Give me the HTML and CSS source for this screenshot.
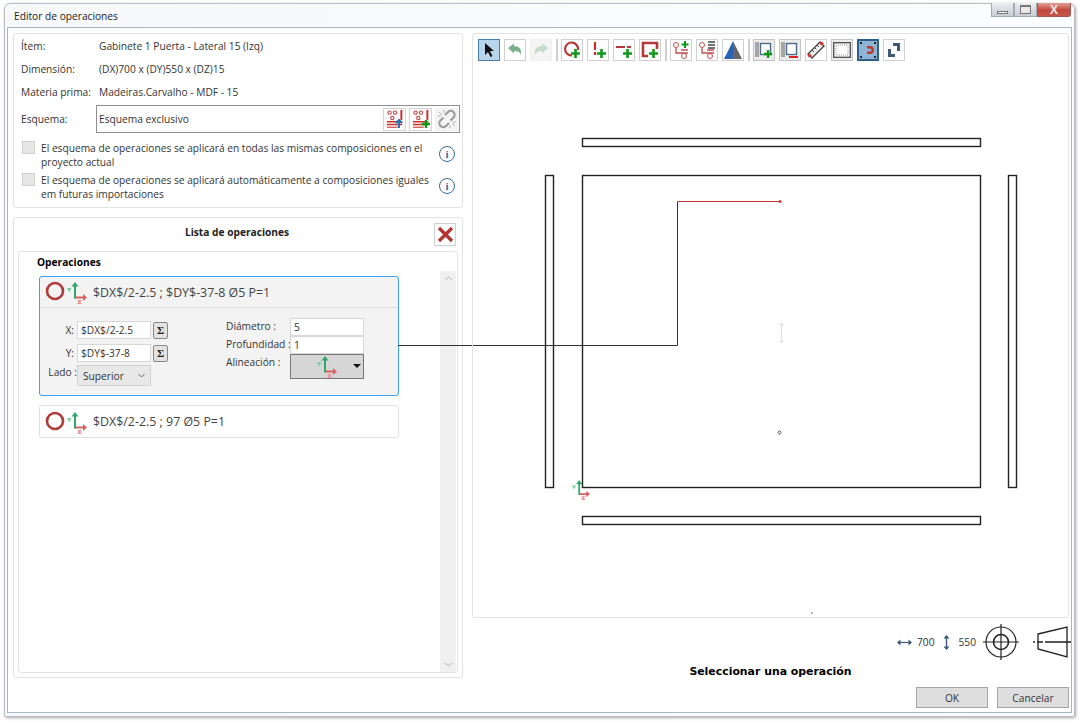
FILE: index.html
```html
<!DOCTYPE html>
<html lang="es">
<head>
  <meta charset="UTF-8" />
  <meta name="viewport" content="width=device-width, initial-scale=1.0"/>
  <title>Editor de operaciones</title>
  <link rel="stylesheet" href="styles.css">
</head>
<body>

<svg class="defs" width="0" height="0">
  <symbol id="axes" viewBox="0 0 20 22">
    <path d="M8 15.500h9" fill="none" stroke="#d9625f" stroke-width="2"/>
    <path d="M8 16.500V3" fill="none" stroke="#2fa86b" stroke-width="2"/>
    <path d="M8 0l3.500 4.500h-7z" fill="#2fa86b"/>
    <path d="M20 15.500l-4-3.500v7z" fill="#d9625f"/>
    <path d="M0 6h4.500l-2.200 4.500z" fill="#7fd0a3"/>
    <path d="M10 18h5l-1.700 2 1.700 2h-5l1.700-2z" fill="#e59a98"/>
  </symbol>
  <symbol id="plus" viewBox="0 0 11 11">
    <path d="M5.500 1v9M1 5.500h9" stroke="#0d9a18" stroke-width="2.600"/>
  </symbol>
  <symbol id="scheme" viewBox="0 0 22 22">
    <circle cx="5" cy="4" r="1.800" fill="none" stroke="#c0504d" stroke-width="1.300"/>
    <circle cx="11" cy="4" r="1.800" fill="none" stroke="#c0504d" stroke-width="1.300"/>
    <circle cx="8" cy="10" r="1.800" fill="none" stroke="#c0504d" stroke-width="1.300"/>
    <path d="M18 1v11" stroke="#c8302c" stroke-width="2.200"/>
    <path d="M2 14h17M2 17h17" stroke="#c8302c" stroke-width="1.600"/>
    <path d="M2 20h12" stroke="#c8302c" stroke-width="1.200"/>
  </symbol>
  <symbol id="op-hole" viewBox="0 0 42 26">
    <circle cx="10" cy="12" r="8" fill="none" stroke="#b23a38" stroke-width="2.600"/>
    <use href="#axes" x="22" y="3" width="20" height="22"/>
  </symbol>
</svg>

<div class="window">
  <div class="titlebar">
    <span class="title-text">Editor de operaciones</span>
    <div class="win-btns">
      <div class="win-btn"><span class="glyph-min"></span></div>
      <div class="win-btn"><span class="glyph-max"></span></div>
      <div class="win-btn win-close">X</div>
    </div>
  </div>

  <div class="content">
    <div class="left-col">

      <div class="card info-card">
        <div class="info-row"><span>Ítem:</span><span>Gabinete 1 Puerta - Lateral 15 (Izq)</span></div>
        <div class="info-row"><span>Dimensión:</span><span>(DX)700 x (DY)550 x (DZ)15</span></div>
        <div class="info-row"><span>Materia prima:</span><span>Madeiras.Carvalho - MDF - 15</span></div>
        <div class="info-row scheme-row">
          <span>Esquema:</span>
          <div class="scheme-box">
            <span class="scheme-name">Esquema exclusivo</span>
            <button class="mini-btn">
              <svg width="20" height="20"><use href="#scheme" width="20" height="20"/><path d="M14 19v-6M11 14l3-3 3 3" fill="none" stroke="#2672b8" stroke-width="2"/></svg>
            </button>
            <button class="mini-btn">
              <svg width="20" height="20"><use href="#scheme" width="20" height="20"/><use href="#plus" x="10" y="10" width="10" height="10"/></svg>
            </button>
            <button class="mini-btn flat">
              <svg width="20" height="20" viewBox="0 0 20 20"><path d="M8 6l3-3a3 3 0 0 1 5.500 5.500l-3 3M12 14l-3 3a3 3 0 0 1-5.500-5.500l3-3" fill="none" stroke="#9a9a9a" stroke-width="2"/><path d="M2 3l3 3M1 7h3M7 1v3M18 17l-3-3M19 13h-3M13 19v-3" stroke="#b5b5b5"/></svg>
            </button>
          </div>
        </div>
        <div class="check-row">
          <span class="check"></span>
          <span class="check-text">El esquema de operaciones se aplicará en todas las mismas composiciones en el proyecto actual</span>
          <span class="info-icon">i</span>
        </div>
        <div class="check-row">
          <span class="check"></span>
          <span class="check-text">El esquema de operaciones se aplicará automáticamente a composiciones iguales em futuras importaciones</span>
          <span class="info-icon">i</span>
        </div>
      </div>

      <div class="card list-card">
        <div class="list-head">
          <span class="list-title">Lista de operaciones</span>
          <button class="close-list">
            <svg width="17" height="17" viewBox="0 0 17 17"><path d="M2 2l13 13M15 2L2 15" stroke="#b5322f" stroke-width="3.200"/></svg>
          </button>
        </div>
        <div class="list-box">
          <div class="list-main">
            <div class="list-label">Operaciones</div>

            <div class="op selected">
              <div class="op-head">
                <svg class="op-icon" width="42" height="26"><use href="#op-hole"/></svg>
                <span>$DX$/2-2.5 ; $DY$-37-8 Ø5 P=1</span>
              </div>
              <div class="op-body">
                <div class="op-pos">
                  <div class="field"><label>X:</label><input class="inp" value="$DX$/2-2.5" /><button class="sigma">Σ</button></div>
                  <div class="field"><label>Y:</label><input class="inp" value="$DY$-37-8" /><button class="sigma">Σ</button></div>
                  <div class="field lado"><label>Lado :</label>
                    <div class="select">Superior
                      <svg width="7" height="5" viewBox="0 0 7 5"><path d="M.5 1l3 3 3-3" fill="none" stroke="#666"/></svg>
                    </div>
                  </div>
                </div>
                <div class="op-size">
                  <label>Diámetro :</label><input class="inp" value="5" />
                  <label>Profundidad :</label><input class="inp" value="1" />
                  <label>Alineación :</label>
                  <div class="align-drop">
                    <svg width="20" height="22"><use href="#axes" width="20" height="22"/></svg>
                    <span class="drop-arrow"></span>
                  </div>
                </div>
              </div>
              <div class="op-link"></div>
            </div>

            <div class="op">
              <div class="op-head">
                <svg class="op-icon" width="42" height="26"><use href="#op-hole"/></svg>
                <span>$DX$/2-2.5 ; 97 Ø5 P=1</span>
              </div>
            </div>
          </div>
          <div class="scroll">
            <svg width="9" height="5" viewBox="0 0 9 5"><path d="M1 4l3.500-3L8 4" fill="none" stroke="#c8c8c8" stroke-width="1.200"/></svg>
            <svg width="9" height="5" viewBox="0 0 9 5"><path d="M1 1l3.500 3L8 1" fill="none" stroke="#c8c8c8" stroke-width="1.200"/></svg>
          </div>
        </div>
      </div>
    </div>

    <div class="right-col">
      <div class="card canvas-card">
        <div class="toolbar">
          <button class="tool active"><svg width="14" height="16" viewBox="0 0 14 16"><path d="M3 1v12l3-3 2.500 5 2-1-2.500-5H12z" fill="#111"/></svg></button>
          <button class="tool"><svg width="16" height="14" viewBox="0 0 16 14"><path d="M1 5l6-4.500V3c5 0 8 3 7 9-1-3-3-4-7-4v2.500z" fill="#7bb08a"/></svg></button>
          <button class="tool off"><svg width="16" height="14" viewBox="0 0 16 14"><path d="M15 5L9 .5V3C4 3 1 6 2 12c1-3 3-4 7-4v2.500z" fill="#c4dcc9"/></svg></button>
          <span class="tool-sep"></span>
          <button class="tool"><svg width="18" height="18" viewBox="0 0 18 18"><path d="M9 14.500A6.500 6.500 0 1 1 15 9" fill="none" stroke="#b23a38" stroke-width="2.200"/><use href="#plus" x="7" y="7" width="11" height="11"/></svg></button>
          <button class="tool"><svg width="18" height="18" viewBox="0 0 18 18"><path d="M6 1v8M6 11v3" stroke="#c8302c" stroke-width="2.200"/><use href="#plus" x="7" y="7" width="11" height="11"/></svg></button>
          <button class="tool"><svg width="18" height="18" viewBox="0 0 18 18"><path d="M1 6h9M12 6h4" stroke="#b23a38" stroke-width="2.200"/><use href="#plus" x="7" y="7" width="11" height="11"/></svg></button>
          <button class="tool"><svg width="18" height="18" viewBox="0 0 18 18"><path d="M7 15H2V2h14v6" fill="none" stroke="#b23a38" stroke-width="2.600"/><use href="#plus" x="7" y="7" width="11" height="11"/></svg></button>
          <span class="tool-sep"></span>
          <button class="tool"><svg width="18" height="18" viewBox="0 0 18 18"><circle cx="4" cy="4" r="2.500" fill="none" stroke="#c0504d"/><circle cx="12" cy="15" r="2.500" fill="none" stroke="#c0504d"/><path d="M4 7v5h6M9 9h7M9 12h7" fill="none" stroke="#c0504d" stroke-width="1.300"/><path d="M13 0v7M9.500 3.500h7" stroke="#0d9a18" stroke-width="2"/></svg></button>
          <button class="tool"><svg width="18" height="18" viewBox="0 0 18 18"><circle cx="4" cy="4" r="2.500" fill="none" stroke="#c0504d"/><circle cx="12" cy="15" r="2.500" fill="none" stroke="#c0504d"/><path d="M4 7v5h6M9 9h7M9 12h7" fill="none" stroke="#c0504d" stroke-width="1.300"/><path d="M10 1h7M10 4h7M10 7h7" stroke="#444" stroke-width="1.600"/></svg></button>
          <button class="tool"><svg width="20" height="20" viewBox="0 0 20 20"><path d="M10 1v18H1z" fill="#2a62b5"/><path d="M10 1v18h9z" fill="#666"/></svg></button>
          <span class="tool-sep"></span>
          <button class="tool gray"><svg width="18" height="18" viewBox="0 0 18 18"><path d="M1 1v15M3 1v15" stroke="#777" stroke-width="1.200"/><rect x="5.500" y="2.500" width="10" height="11" fill="#fff" stroke="#4d6c8c" stroke-width="1.400"/><use href="#plus" x="8" y="8" width="10" height="10"/></svg></button>
          <button class="tool gray"><svg width="18" height="18" viewBox="0 0 18 18"><path d="M1 1v15M3 1v15" stroke="#777" stroke-width="1.200"/><rect x="5.500" y="2.500" width="10" height="11" fill="#fff" stroke="#4d6c8c" stroke-width="1.400"/><path d="M8 16h9" stroke="#d22" stroke-width="2"/></svg></button>
          <button class="tool"><svg width="20" height="20" viewBox="0 0 20 20"><path d="M2 14L14 2l4 4L6 18z" fill="#f4f4f4" stroke="#444" stroke-width="1.400"/><path d="M6 10l2 2M8.500 7.500l2 2M11 5l2 2" stroke="#444"/><circle cx="3.500" cy="15.500" r="1.800" fill="#d33"/><circle cx="15.500" cy="3.500" r="1.800" fill="#d33"/></svg></button>
          <button class="tool gray"><svg width="18" height="16" viewBox="0 0 18 16"><rect x=".7" y=".7" width="16.600" height="14.600" fill="#fff" stroke="#555" stroke-width="1.400"/><rect x="3" y="3" width="12" height="10" fill="none" stroke="#999" stroke-dasharray="1 1"/></svg></button>
          <button class="tool active dark"><svg width="18" height="18" viewBox="0 0 18 18"><path d="M8 5h3a4 4 0 0 1 0 8H8v-2.500h3a1.500 1.500 0 0 0 0-3H8z" fill="#c0392b"/><path d="M1 1h2v2H1zM15 1h2v2h-2zM1 15h2v2H1zM15 15h2v2h-2z" fill="#223"/></svg></button>
          <button class="tool"><svg width="16" height="16" viewBox="0 0 16 16"><path d="M2 15V7h3v5h4v3zM14 1v8h-3V4H7V1z" fill="#3c5a78"/></svg></button>
        </div>

        <svg class="drawing" width="595" height="583" viewBox="473 34 595 583">
          <g fill="none" stroke="#222" stroke-width="1.400">
            <rect x="582.500" y="138.500" width="398" height="8"/>
            <rect x="582.500" y="175.500" width="398" height="312"/>
            <rect x="545.500" y="175.500" width="8" height="312"/>
            <rect x="1008.500" y="175.500" width="8" height="312"/>
            <rect x="582.500" y="516.500" width="398" height="8"/>
          </g>
          <path d="M472 345.500h205.500V201.500" fill="none" stroke="#333"/>
          <path d="M677.500 201.500H780" fill="none" stroke="#b33"/>
          <circle cx="780" cy="201.500" r="1.500" fill="#d33"/>
          <circle cx="779.500" cy="432.500" r="1.500" fill="#fff" stroke="#333" stroke-width=".8"/>
          <path d="M781.500 323v20M779.500 326l2-3 2 3M779.500 340l2 3 2-3" fill="none" stroke="#e2e2e2"/>
          <rect x="811" y="612.500" width="1.500" height="1.500" fill="#888"/>
          <use href="#axes" x="572" y="480" width="18" height="20"/>
        </svg>
      </div>

      <div class="dims">
        <svg width="15" height="7" viewBox="0 0 15 7"><path d="M1 3.500h13" stroke="#3c5a78" stroke-width="1.200"/><path d="M0 3.500l3.500-3v6zM15 3.500l-3.500-3v6z" fill="#3c5a78"/></svg>
        <span class="dim-val">700</span>
        <svg class="dim-v" width="7" height="15" viewBox="0 0 7 15"><path d="M3.500 1v13" stroke="#3c5a78" stroke-width="1.400"/><path d="M3.500 0l-3 3.500h6zM3.500 15l-3-3.500h6z" fill="#3c5a78"/></svg>
        <span class="dim-val wide">550</span>
        <svg class="target" width="36" height="36" viewBox="0 0 36 36" fill="none" stroke="#222" stroke-width="1.200">
          <circle cx="18" cy="18" r="15"/>
          <circle cx="18" cy="18" r="7.500" stroke-width="1.600"/>
          <path d="M18 0v36M0 18h36"/>
        </svg>
        <svg width="38" height="32" viewBox="0 0 38 32" fill="none" stroke="#222" stroke-width="1.300">
          <path d="M5 8l29-7v30L5 23z"/>
          <path d="M0 16h2M4 16h6M12 16h26" />
        </svg>
      </div>

      <div class="status">Seleccionar una operación</div>

      <div class="actions">
        <button class="btn">OK</button>
        <button class="btn">Cancelar</button>
      </div>
    </div>
  </div>
</div>

</body>
</html>
```

FILE: styles.css
```css
* {
  margin: 0;
  padding: 0;
  box-sizing: border-box;
}
html, body {
  width: 1084px;
  height: 723px;
  overflow: hidden;
}
body {
  background: #fff;
  font-family: "Open Sans", "Noto Sans", sans-serif;
  font-size: 10.2px;
  color: #333;
}
button, input {
  font-family: inherit;
  font-size: inherit;
  color: inherit;
}
.defs {
  display: block;
  height: 0;
}

/* window frame */
.window {
  width: 1071px;
  height: 714px;
  margin: 3px 0 0 4px;
  padding: 0 2px 3px;
  border: 1px solid #b9bcc2;
  border-radius: 6px 6px 2px 2px;
  background: linear-gradient(to right, #f7f8fa, #fbfcfe);
  box-shadow: 1px 1px 3px rgba(0,0,0,0.35);
  display: flex;
  flex-direction: column;
}
.titlebar {
  height: 23px;
  flex: none;
  display: flex;
  justify-content: space-between;
  padding-left: 7px;
  line-height: 24px;
}
.title-text {
  color: #222;
}
.win-btns {
  display: flex;
  height: 14px;
  margin-top: -1px;
  margin-right: 1px;
}
.win-btn {
  width: 23px;
  background: linear-gradient(#eceef2, #c8ccd3);
  border: 1px solid #a5abb3;
  border-top: none;
  display: flex;
  align-items: center;
  justify-content: center;
}
.win-close {
  width: 34px;
  background: linear-gradient(#e2a097, #c2483a 55%, #c4574a);
  border-color: #a5554c;
  border-radius: 0 0 3px 0;
  color: #eee4e1;
  font-weight: 700;
  font-size: 12px;
  line-height: 12px;
}
.glyph-min {
  width: 11px;
  height: 3px;
  margin-top: 5px;
  background: #fff;
  border: 1px solid #777;
}
.glyph-max {
  width: 11px;
  height: 9px;
  border: 1px solid #777;
  border-top-width: 2px;
  background: #e8e8e8;
}
.content {
  flex: 1;
  display: grid;
  grid-template-columns: 450px 597px;
  column-gap: 9px;
  align-content: start;
  padding: 5px 2px 0 5px;
  background: #fff;
  border: 1px solid #a9b4c4;
}

.card {
  background: #fff;
  border: 1px solid #e3e3e3;
  border-radius: 3px;
}
.left-col {
  display: flex;
  flex-direction: column;
  gap: 9px;
}

/* item info */
.info-card {
  height: 175px;
  padding: 0 2px 0 7px;
}
.info-row {
  display: grid;
  grid-template-columns: 78px 1fr;
  height: 23px;
  align-items: center;
}
.scheme-row {
  height: 28px;
  margin: 2px 0 8px;
  grid-template-columns: 75px 1fr;
}
.scheme-box {
  height: 28px;
  display: flex;
  align-items: center;
  gap: 3px;
  padding: 0 1px 0 2px;
  border: 1px solid #8f8f8f;
}
.scheme-name {
  flex: 1;
}
.mini-btn {
  width: 23px;
  height: 23px;
  background: #fff;
  border: 1px solid #d4d4d4;
  display: flex;
  align-items: center;
  justify-content: center;
}
.mini-btn.flat {
  border-color: #f0f0f0;
  background: #f4f4f4;
}
.check-row {
  display: grid;
  grid-template-columns: 19px 1fr 26px;
  height: 32px;
  line-height: 14px;
  padding-left: 1px;
}
.check {
  width: 13px;
  height: 13px;
  background: #e6e6e6;
  border: 1px solid #cfcfcf;
}
.check-text {
  padding-top: 0;
}
.info-icon {
  width: 16px;
  height: 16px;
  justify-self: center;
  margin-top: 5px;
  border: 1px solid #3c6a96;
  border-radius: 50%;
  color: #3c6a96;
  font: bold 11px/14px "Liberation Serif", serif;
  text-align: center;
}

/* operations list */
.list-card {
  height: 461px;
  display: flex;
  flex-direction: column;
  padding: 5px 4px 4px;
}
.list-head {
  height: 28px;
  flex: none;
  position: relative;
  display: flex;
  justify-content: center;
  padding: 2px 2px 0 0;
  line-height: 14px;
}
.list-title {
  font-weight: 700;
  color: #222;
}
.close-list {
  position: absolute;
  right: 2px;
  top: 0;
  width: 22px;
  height: 23px;
  background: #fff;
  border: 1px solid #cfcfcf;
  display: flex;
  align-items: center;
  justify-content: center;
}
.list-box {
  flex: 1;
  display: flex;
  border: 1px solid #e3e3e3;
  border-radius: 3px;
  padding-right: 1px;
}
.list-main {
  flex: 1;
  padding: 3px 41px 0 20px;
}
.list-label {
  height: 21px;
  font-weight: 700;
  color: #000;
  margin-left: -2px;
}
.scroll {
  width: 16px;
  margin-top: 19px;
  background: #f0f0f0;
  display: flex;
  flex-direction: column;
  justify-content: space-between;
  align-items: center;
  padding: 5px 0;
}

.op {
  position: relative;
  background: #fff;
  border: 1px solid #e0e0e0;
  border-radius: 3px;
  margin-bottom: 9px;
}
.op.selected {
  height: 120px;
  background: #f3f3f3;
  border-color: #3f9ff5;
}
.op-head {
  height: 31px;
  display: flex;
  align-items: center;
  gap: 6px;
  padding-left: 5px;
  font-size: 12.4px;
  color: #444;
}
.selected .op-head {
  border-bottom: 1px solid #e0e0e0;
}
.op-icon {
  flex: none;
}
.op-link {
  position: absolute;
  left: 100%;
  top: 68px;
  width: 74px;
  height: 1px;
  background: #333;
}
.op-body {
  display: flex;
  padding-top: 10px;
}
.op-pos {
  width: 186px;
  display: flex;
  flex-direction: column;
  padding-top: 3px;
  gap: 5px;
}
.field {
  display: flex;
  align-items: center;
  height: 18px;
}
.field label {
  width: 37px;
  padding-right: 3px;
  text-align: right;
}
.field.lado {
  height: 21px;
  margin-top: -2px;
}
.field.lado label {
  align-self: flex-start;
  padding-right: 0;
  white-space: nowrap;
}
.inp {
  width: 74px;
  height: 18px;
  padding: 0 3px;
  background: #fff;
  border: 1px solid #d8d8d8;
  outline: none;
  color: #333;
}
.sigma {
  width: 15px;
  height: 17px;
  margin-left: 2px;
  background: #e2e2e2;
  border: 1px solid #888;
  border-radius: 2px;
  font-family: "Liberation Serif", serif;
  font-size: 11px;
  font-weight: 700;
  line-height: 14px;
  color: #222;
}
.select {
  width: 74px;
  height: 21px;
  background: #e8e8e8;
  border: 1px solid #d2d2d2;
  display: flex;
  align-items: center;
  justify-content: space-between;
  padding: 0 5px;
}
.op-size {
  display: grid;
  grid-template-columns: 64px 74px;
  grid-auto-rows: 18px;
}
.op-size label {
  line-height: 16px;
  white-space: nowrap;
}
.align-drop {
  width: 74px;
  height: 25px;
  background: #d6d6d6;
  border: 1px solid #777;
  display: flex;
  align-items: center;
  padding-left: 26px;
  position: relative;
}
.drop-arrow {
  position: absolute;
  right: 2px;
  top: 9px;
  border: 4px solid transparent;
  border-top: 4px solid #111;
  border-bottom: none;
}

/* drawing panel */
.right-col {
  display: flex;
  flex-direction: column;
}
.canvas-card {
  height: 585px;
  position: relative;
}
.toolbar {
  position: absolute;
  left: 5px;
  top: 5px;
  display: flex;
  align-items: center;
  gap: 4px;
  z-index: 1;
}
.tool {
  width: 22px;
  height: 22px;
  background: #fff;
  border: 1px solid #d0d0d0;
  display: flex;
  align-items: center;
  justify-content: center;
}
.tool.active {
  background: #b7d6ec;
  border-color: #4d7ca3;
}
.tool.dark {
  background: #8fb4d4;
  border-color: #2e5f8a;
  border-width: 2px;
}
.tool.off {
  background: #f4f4f4;
  border-color: #f0f0f0;
}
.tool.gray {
  background: #ececec;
  border-color: #c4c4c4;
}
.tool-sep {
  width: 2px;
  height: 22px;
  background: #d0d0d0;
  margin-right: -1px;
}
.drawing {
  display: block;
}

.dims {
  height: 36px;
  margin: 6px -2px 0 0;
  display: flex;
  align-items: center;
  justify-content: flex-end;
}
.dim-val {
  margin-left: 5px;
}
.dim-val.wide {
  margin-left: 9px;
}
.dim-v {
  margin-left: 8px;
}
.target {
  margin: 0 14px 0 7px;
}
.status {
  height: 16px;
  margin-top: 4px;
  text-align: center;
  font-family: "DejaVu Sans", sans-serif;
  font-size: 10.9px;
  font-weight: 700;
  line-height: 16px;
  color: #000;
}
.actions {
  display: flex;
  justify-content: flex-end;
  gap: 9px;
  margin-top: 7px;
}
.btn {
  width: 72px;
  height: 21px;
  background: #dedede;
  border: 1px solid #a6a6a6;
}
```
